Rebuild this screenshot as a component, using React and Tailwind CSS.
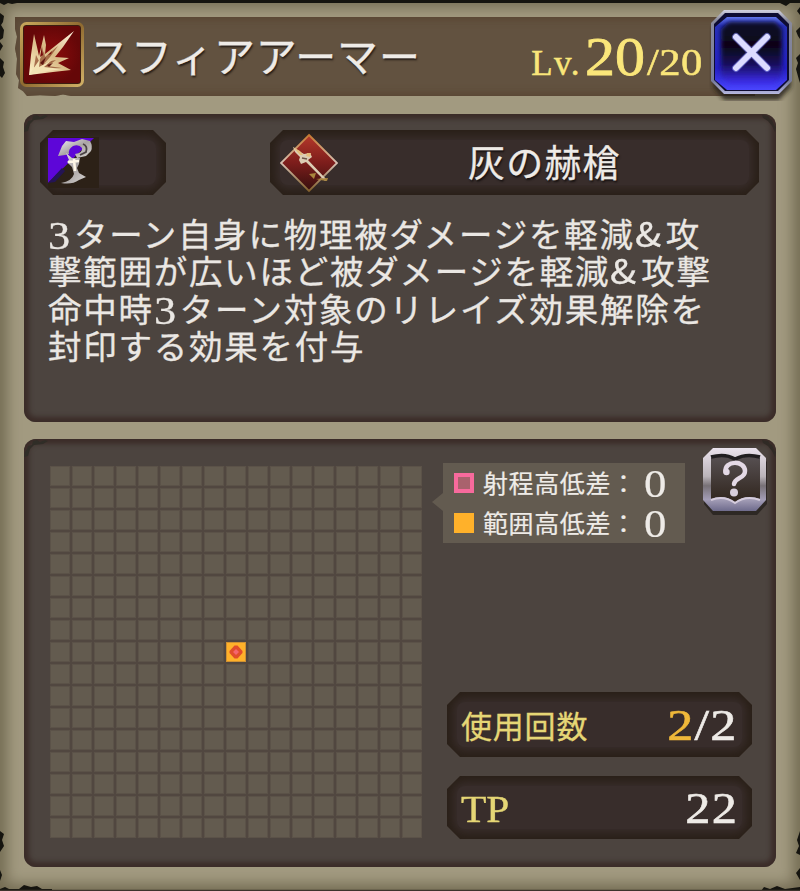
import React from "react";

const SERIF = "font-['Liberation_Serif','Noto_Sans_CJK_JP',serif]";
const GRID_SIZE = 17;
const CENTER = Math.floor((GRID_SIZE * GRID_SIZE) / 2);

// Sunken dark plate with cut corners
function Plate({ className = "", children }) {
  return (
    <div className={`relative bg-[#2a2018] [clip-path:polygon(13px_0,calc(100%-13px)_0,100%_13px,100%_calc(100%-13px),calc(100%-13px)_100%,13px_100%,0_calc(100%-13px),0_13px)] ${className}`}>
      <div className="absolute inset-[10px] rounded-lg bg-[#382d2b] shadow-[0_0_8px_4px_#382d2b]" />
      <div className="relative flex h-full w-full items-center">{children}</div>
    </div>
  );
}

function Panel({ className = "", children }) {
  return (
    <section className={`relative rounded-[12px] bg-[#4c443f] shadow-[inset_0_0_5px_5px_#3b2c28] ${className}`}>
      {/* chipped corners */}
      <svg className="pointer-events-none absolute top-0 left-0 h-[20px] w-[26px] overflow-visible" aria-hidden="true">
        <path d="M0 18 L1 13 L3 10 L4 7 L8 6 L9 2 L13 1 L16 3 L21 1 L24 2 L19 5 L10 6 L6 10 L4 17Z" fill="#302d27" />
      </svg>
      <svg className="pointer-events-none absolute top-0 right-0 h-[20px] w-[26px] overflow-visible" aria-hidden="true">
        <path d="M12 1 L18 2 L20 5 L22 6 L24 11 L26 13 L25 18 L22 12 L18 7 L13 4Z" fill="#302a25" />
      </svg>
      {children}
    </section>
  );
}

function SkillIcon() {
  return (
    <svg viewBox="0 0 64 66" className="h-[66px] w-[64px] shrink-0">
      <defs>
        <linearGradient id="gold" x1="0" y1="0" x2="1" y2="1">
          <stop offset="0" stopColor="#c8a85c" />
          <stop offset=".5" stopColor="#8f6a30" />
          <stop offset="1" stopColor="#d0b066" />
        </linearGradient>
        <radialGradient id="blood">
          <stop offset="0" stopColor="#8c0b0c" />
          <stop offset="1" stopColor="#650708" />
        </radialGradient>
        <linearGradient id="spark" x1="1" y1="0" x2="0" y2="1">
          <stop offset="0" stopColor="#fff4e0" />
          <stop offset=".5" stopColor="#d8b884" />
          <stop offset="1" stopColor="#fff3c8" />
        </linearGradient>
      </defs>
      <rect x="1.5" y="1.5" width="61" height="62" rx="5" fill="#3c1c10" stroke="url(#gold)" strokeWidth="3" />
      <rect x="4" y="4" width="56" height="57" rx="2" fill="url(#blood)" />
      {/* burst of shards from the lower left */}
      <path d="M9 53 L11 33 L14 12 L17 25 L19 34 L24 13 L26 23 L25 32 L54 9 L43 25 L35 35 L49 36 L38 41 L51 48 L33 50Z" fill="url(#spark)" />
      <path d="M14 45 L16 33 L19 39 L24 29 L25 35 L38 24 L30 35 L24 42 L31 39 L36 38 L28 44 L42 46 L25 48 L17 48Z" fill="#8a4526" opacity=".7" />
      <path d="M9 53 L20 37 L19 45 L32 38 L24 45 L42 47 L21 50Z" fill="#f3e3b4" />
      <path d="M20 41 L26 35 L23 43Z M27 43 L33 41 L29 45Z" fill="#5e1711" />
      <path d="M20 35 L22 24 L23 33Z M28 33 L32 29 L31 32Z" fill="#760a0b" />
    </svg>
  );
}

function CloseButton() {
  return (
    <button className="absolute top-[9px] left-[709px] h-[92px] w-[86px]" aria-label="close">
      <svg viewBox="0 0 86 92" className="h-full w-full">
        <defs>
          <linearGradient id="closeEdge" x1="0" y1="0" x2="0" y2="1">
            <stop offset="0" stopColor="#d2d2e2" />
            <stop offset=".12" stopColor="#898a9b" />
            <stop offset=".85" stopColor="#777b9b" />
            <stop offset="1" stopColor="#b5b7e0" />
          </linearGradient>
          <linearGradient id="closeBlue" x1="0" y1="0" x2="0" y2="1">
            <stop offset="0" stopColor="#6377ef" />
            <stop offset=".12" stopColor="#2730b8" />
            <stop offset=".7" stopColor="#2420c4" />
            <stop offset="1" stopColor="#4a45ff" />
          </linearGradient>
          <linearGradient id="closeCore" x1="0" y1="0" x2="0" y2="1">
            <stop offset="0" stopColor="#10092c" />
            <stop offset=".4" stopColor="#0a0616" />
            <stop offset=".7" stopColor="#190f5c" />
            <stop offset="1" stopColor="#3d2df0" />
          </linearGradient>
          <filter id="soft" x="-20%" y="-20%" width="140%" height="140%"><feGaussianBlur stdDeviation="2" /></filter>
        </defs>
        <path d="M15 7 H70 L82 19 V78 L70 91 H15 L4 78 V19Z" fill="#201d18" opacity=".8" filter="url(#soft)" />
        <path d="M15 1 H70 L83 14 V72 L70 85 H15 L2 72 V14Z" fill="url(#closeEdge)" />
        <path d="M16 4 H69 L80 15 V71 L69 82 H16 L5 71 V15Z" fill="#0e0c32" />
        <path d="M18 8 H67 L78 18 V71 L67 81 H18 L6 71 V18Z" fill="url(#closeBlue)" />
        <path d="M20 13 H66 L73 20 V67 L66 74 H20 L12 67 V20Z" fill="url(#closeCore)" filter="url(#soft)" />
        <path d="M27 28 L58 59 M58 28 L27 59" stroke="#777be6" strokeWidth="8" strokeLinecap="round" opacity=".6" />
        <path d="M27 28 L58 59 M58 28 L27 59" stroke="#dcdcff" strokeWidth="6" strokeLinecap="round" />
      </svg>
    </button>
  );
}

function ScytheIcon() {
  return (
    <svg viewBox="0 0 52 52" className="ml-[8px] h-[52px] w-[52px]">
      <defs>
        <linearGradient id="steel" x1="0" y1="0" x2="1" y2="1">
          <stop offset="0" stopColor="#f5f2fa" />
          <stop offset=".5" stopColor="#a9a4a4" />
          <stop offset="1" stopColor="#d8d5d2" />
        </linearGradient>
      </defs>
      <rect width="51" height="51" fill="#2c2117" />
      <path d="M0 1 H46 L0 46Z" fill="#5d06d8" />
      <path d="M0 46 L14 31 L17 34 L7 45Z" fill="#241454" />
      {/* hooked blade */}
      <path d="M10 19 L14 9 L18 4 L26 5 L34 2 L42 4 Q45 9 43 14 L38 19 L29 21 L27 17 Q35 16 34 11 Q31 7 25 9 Q20 12 21 17 L17 18Z" fill="url(#steel)" />
      <path d="M35 7 Q40 9 38 15 L32 18" fill="none" stroke="#4a4244" strokeWidth="1.8" />
      {/* shaft and spike */}
      <path d="M18 16 L24 21 L32 21 L31 27 L29 31 L31 36 L38 40 L31 43 Q24 48 13 46 Q24 44 26 37 L24 30 L19 25 L21 23Z" fill="url(#steel)" />
      <path d="M20 25 L31 24 M26 22 L27 34" stroke="#fff8e8" strokeWidth="2.6" />
    </svg>
  );
}

function SpearIcon() {
  return (
    <svg viewBox="0 0 58 60" className="ml-[10px] h-[60px] w-[58px] shrink-0">
      <defs>
        <linearGradient id="ruby" x1="0" y1="0" x2="0" y2="1">
          <stop offset="0" stopColor="#b5382a" />
          <stop offset=".5" stopColor="#7c1d1b" />
          <stop offset="1" stopColor="#350f0e" />
        </linearGradient>
        <linearGradient id="rim" x1="0" y1="0" x2="0" y2="1">
          <stop offset="0" stopColor="#c67a32" />
          <stop offset=".5" stopColor="#d8c2b4" />
          <stop offset="1" stopColor="#82602c" />
        </linearGradient>
      </defs>
      <path d="M29 2 L57 30 L29 58 L1 30Z" fill="url(#ruby)" stroke="url(#rim)" strokeWidth="1.8" />
      <path d="M13 14 L19 18 L24 21 L30 20 L32 24 L28 27 L47 47 L45 48 L26 29 L21 31 L19 27 L20 24 L15 19Z" fill="#dccdb4" />
      <path d="M13 14 L20 18 L23 22 L20 22Z M27 20 L31 20 L30 24 L26 23Z" fill="#e5bd7c" />
      <path d="M29 41 L36 40 L34 46Z M36 46 L48 45 L47 48 L40 47Z" fill="#a9853c" />
      <path d="M22 25 L27 26" stroke="#6f564a" strokeWidth="1.4" />
    </svg>
  );
}

function HelpButton() {
  return (
    <button className="h-[68px] w-[66px]" aria-label="help">
      <svg viewBox="0 0 66 68" className="h-full w-full">
        <defs>
          <linearGradient id="silver" x1="0" y1="0" x2="0" y2="1">
            <stop offset="0" stopColor="#ebe3ed" />
            <stop offset=".45" stopColor="#bab4b9" />
            <stop offset=".6" stopColor="#777176" />
            <stop offset=".82" stopColor="#a39db6" />
            <stop offset="1" stopColor="#6e6b8c" />
          </linearGradient>
          <linearGradient id="page" x1="0" y1="0" x2="0" y2="1">
            <stop offset="0" stopColor="#575052" />
            <stop offset="1" stopColor="#30251d" />
          </linearGradient>
        </defs>
        <path d="M12 4 H55 L65 14 V56 L55 67 H11 L2 56 V14Z" fill="#211c1a" opacity=".7" />
        <path d="M11 0 H54 L64 10 V52 L54 63 H11 L1 52 V10Z" fill="url(#silver)" />
        <path d="M9 10 Q23 6 33 12 Q44 6 58 10 V51 Q44 46 33 54 Q22 46 9 51Z" fill="url(#page)" />
        <path d="M9 9 Q23 5 33 11 Q44 5 58 9" fill="none" stroke="#211e20" strokeWidth="3.5" />
        <path d="M9 52 Q22 47 33 55 Q44 47 58 52" fill="none" stroke="#d4cbdc" strokeWidth="2" />
        <path d="M23.5 24 C22 12 43 12 43 23 C43 31 33 29 32 36" fill="none" stroke="#e4d9e6" strokeWidth="4.5" strokeLinecap="round" />
        <circle cx="24.5" cy="24" r="3.2" fill="#e4d9e6" />
        <circle cx="32" cy="44.5" r="4" fill="#d8cedb" />
      </svg>
    </button>
  );
}

// Torn paper at the borders of the window
function TornEdges() {
  return (
    <svg viewBox="0 0 800 891" className="pointer-events-none absolute inset-0 h-full w-full" aria-hidden="true">
      <g fill="#15140f">
        <path d="M0 0 H800 V3 H790 L786 6 L780 3 H17 L12 4 L8 3 L4 5 L0 3Z" />
        <path d="M0 13 L4 16 L3 22 L1 25 L4 30 L3 38 L0 40Z M0 42 L3 46 L0 51Z M0 58 L4 62 L3 67 L5 73 L2 78 L0 76Z" />
        <path d="M800 7 L797 11 L800 15Z M800 27 L796 31 L798 36 L800 39Z M800 54 L796 58 L798 63 L796 69 L799 80 L800 83Z" />
        <path d="M0 831 L4 834 L2 840 L4 846 L0 852Z M0 870 L2 875 L0 881Z M0 889 L5 887 L9 889 L19 889 L24 885 L31 887 L37 886 L42 889 L52 889 V891 H0Z" />
        <path d="M800 831 L797 840 L799 846 L796 853 L800 855Z M800 868 L796 873 L800 880Z M761 891 L764 887 L770 889 L777 886 L785 889 L800 887 V891Z" />
      </g>
      <path d="M0 890.5 H800" stroke="#3d342b" strokeWidth="1.5" />
    </svg>
  );
}

const LINES = [
  ["3", "ターン自身に物理被ダメージを軽減", "&", "攻"],
  ["撃範囲が広いほど被ダメージを軽減", "&", "攻撃"],
  ["命中時", "3", "ターン対象のリレイズ効果解除を"],
  ["封印する効果を付与"],
];

function Description() {
  return (
    <div className="mt-[19px] ml-[24px] text-[33.5px] leading-[37.3px] font-normal tracking-[1.75px] text-[#eae7e3] [-webkit-text-stroke:0.3px_#eae7e3]">
      {LINES.map((parts, i) => (
        <div key={i} className="flex h-[37.3px] whitespace-nowrap">
          {parts.map((p, j) => {
            if (p === "3") return <span key={j} className="mt-[3px] w-[26px] origin-left scale-x-[1.08] font-['Liberation_Serif',serif] text-[41px] tracking-normal">{p}</span>;
            if (p === "&") return <span key={j} className="w-[31px] origin-left scale-x-[1.15] tracking-normal">{p}</span>;
            return <span key={j}>{p}</span>;
          })}
        </div>
      ))}
    </div>
  );
}

function LegendRow({ swatch, label }) {
  return (
    <div className="flex h-[40px] items-center">
      <span className={`ml-[11px] h-[20px] w-[20px] ${swatch}`} />
      <span className="-mt-[2px] ml-[9px] w-[161px] text-[25px] leading-none tracking-[0.6px] whitespace-nowrap [-webkit-text-stroke:0.2px_currentColor]">{label}</span>
      <span className={`${SERIF} mt-[1px] origin-left scale-x-[1.12] text-[40px] leading-none [-webkit-text-stroke:0.2px_currentColor]`}>0</span>
    </div>
  );
}

export default function App() {
  return (
    <main className="relative flex h-[891px] w-[800px] flex-col overflow-hidden bg-[#a29a80] font-['Noto_Sans_CJK_JP',sans-serif] text-[#eeebe7] shadow-[inset_0_0_14px_7px_#746c53]">
      <TornEdges />

      {/* Skill name and level */}
      <header className="relative mt-[17px] ml-[15px] flex h-[79px] w-[740px] shrink-0 items-center bg-[#625240] shadow-[inset_0_0_8px_2px_#584431] [clip-path:polygon(0_0,100%_0,100%_100%,56px_100%,48px_98%,40px_100%,25px_99%,12px_100%,8px_94%,3px_90%,4px_80%,1px_72%,2px_53%,0_40%,2px_25%,0_15%)]">
        <div className="-mt-[4px] ml-[5px]"><SkillIcon /></div>
        <h1 className="-mt-[5px] ml-[5px] text-[41px] leading-none tracking-[0.9px] whitespace-nowrap [-webkit-text-stroke:0.3px_currentColor] [text-shadow:1px_2px_2px_#241c16]">スフィアアーマー</h1>
        <div className={`mr-[50px] ml-auto flex items-baseline text-[#fae67a] [-webkit-text-stroke:0.5px_#fae67a] ${SERIF} leading-none`}>
          <span className="text-[35px] tracking-[1.5px]">Lv.</span>
          <span className="ml-[4px] w-[62px] origin-left scale-x-[1.09] text-[55px] [-webkit-text-stroke:0.8px_#fae67a]">20</span>
          <span className="w-[58px] origin-left scale-x-[1.12] text-[38px] tracking-[0.4px]">/20</span>
        </div>
      </header>
      <CloseButton />

      {/* What the skill does */}
      <Panel className="mx-[24px] mt-[18px] h-[308px] shrink-0">
        <div className="flex pt-[16px] pl-[16px]">
          <Plate className="h-[65px] w-[126px]"><ScytheIcon /></Plate>
          <Plate className="ml-[104px] h-[65px] w-[489px]">
            <SpearIcon />
            <span className="-mt-[2px] ml-[130px] text-[37px] leading-none tracking-[1.2px] [-webkit-text-stroke:0.3px_currentColor] [text-shadow:1px_2px_2px_#151010]">灰の赫槍</span>
          </Plate>
        </div>
        <Description />
      </Panel>

      {/* Range, uses and cost */}
      <Panel className="mx-[24px] mt-[17px] flex h-[428px] shrink-0">
        <div className="mt-[27px] ml-[26px] grid h-[372px] w-[372px] shrink-0 grid-cols-17 grid-rows-17 gap-[2px] bg-[#514740]">
          {Array.from({ length: GRID_SIZE * GRID_SIZE }, (_, i) => (
            <div key={i} className={`flex min-h-0 items-center justify-center border ${i === CENTER ? "border-[#cf9132] bg-[#ffb12a]" : "border-[#5b5248] bg-[#635b4f]"}`}>
              {i === CENTER && (
                <svg viewBox="0 0 14 14" className="h-[14px] w-[14px]">
                  <path d="M5.5 .5 H8.5 L13.5 6 V8 L8.5 13.5 H5.5 L.5 8 V6Z" fill="#e14c2b" />
                  <path d="M7 4 L10 7 L7 10 L4 7Z" fill="#f5656e" />
                </svg>
              )}
            </div>
          ))}
        </div>

        <div className="flex flex-col">
          <div className="mt-[9px] flex">
            <svg viewBox="0 0 11 18" className="mt-[45px] ml-[10px] h-[18px] w-[11px]"><path d="M11 0 V18 L0 9Z" fill="#635b50" /></svg>
            <div className="mt-[15px] h-[80px] w-[242px] bg-[#635b50]">
              <LegendRow swatch="border-[4px] border-[#f76a9c] bg-[#a9626d]" label="射程高低差：" />
              <LegendRow swatch="bg-[#ffb12a]" label="範囲高低差：" />
            </div>
            <div className="ml-[17px]"><HelpButton /></div>
          </div>
          <div className="mt-auto mb-[28px] ml-[25px] flex flex-col gap-[19px]">
            <Plate className="h-[65px] w-[305px]">
              <span className="ml-[14px] text-[31px] leading-none tracking-[0.8px] text-[#e5d675] [-webkit-text-stroke:0.3px_currentColor]">使用回数</span>
              <span className={`mt-[1px] mr-[14px] ml-auto origin-right scale-x-[1.16] text-[45px] leading-none tracking-[1px] [-webkit-text-stroke:0.6px_currentColor] ${SERIF}`}>
                <span className="text-[#efb83a] [-webkit-text-stroke:0.6px_#efb83a]">2</span>/2
              </span>
            </Plate>
            <Plate className="h-[63px] w-[305px]">
              <span className={`mt-[4px] ml-[14px] origin-left scale-x-[1.12] text-[37px] leading-none text-[#e5d675] [-webkit-text-stroke:0.4px_currentColor] ${SERIF}`}>TP</span>
              <span className={`mt-[1px] mr-[14px] ml-auto origin-right scale-x-[1.12] text-[45px] leading-none tracking-[1px] [-webkit-text-stroke:0.6px_currentColor] ${SERIF}`}>22</span>
            </Plate>
          </div>
        </div>
      </Panel>
    </main>
  );
}
